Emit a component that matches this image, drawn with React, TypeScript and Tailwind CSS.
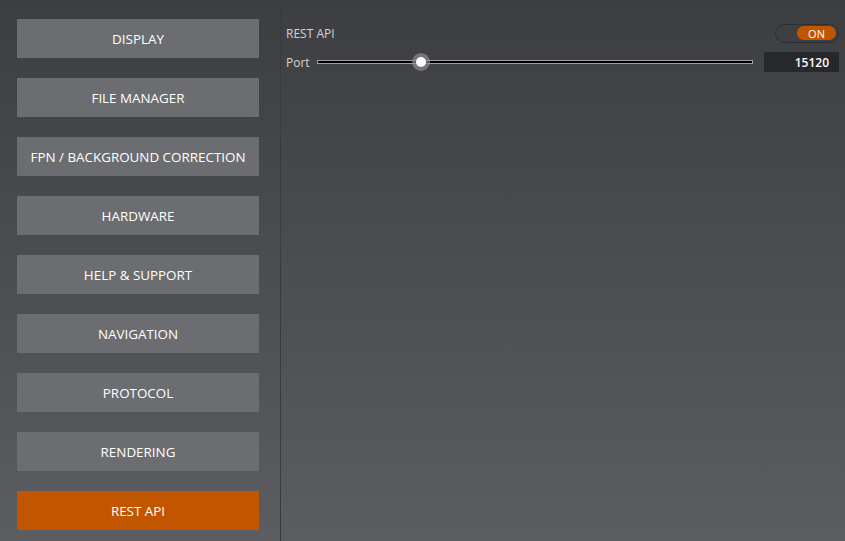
import { useState } from 'react';

const SECTIONS = [
  'DISPLAY',
  'FILE MANAGER',
  'FPN / BACKGROUND CORRECTION',
  'HARDWARE',
  'HELP & SUPPORT',
  'NAVIGATION',
  'PROTOCOL',
  'RENDERING',
  'REST API',
];

export default function App() {
  const [active, setActive] = useState('REST API');
  const [enabled, setEnabled] = useState(true);
  const [port] = useState(15120);

  return (
    <div
      className="flex h-[541px] w-[845px] bg-gradient-to-b from-[#3d3e42] to-[#5c5d61] text-white"
      style={{ fontFamily: '"Open Sans", "Noto Sans", sans-serif' }}
    >
      <aside className="flex w-[280px] shrink-0 flex-col gap-5 pl-[17px] pt-[19px]">
        {SECTIONS.map((name) => (
          <button
            key={name}
            onClick={() => setActive(name)}
            className={`h-[39px] w-[242px] pt-[2px] text-[13.4px] ${
              active === name ? 'bg-[#c25500]' : 'bg-[#6c6d71]'
            }`}
          >
            {name}
          </button>
        ))}
      </aside>

      <div className="w-px bg-[#3a3b3f]" />

      <main className="flex-1 pl-[5px] pr-[6px] pt-[24px]">
        <div className="flex h-[18px] items-center justify-between">
          <span className="pt-[2px] text-[12px] text-[#d4d4d8]">REST API</span>
          <button
            onClick={() => setEnabled(!enabled)}
            className="flex h-[19px] w-[64px] items-center justify-end rounded-full border border-[#2e2f33] bg-[#3e3f43] px-[2px]"
          >
            <span
              className={`flex h-[14px] w-[39px] items-center justify-center rounded-full text-[11px] leading-none ${
                enabled ? 'bg-[#c25500]' : 'bg-[#6c6d71]'
              }`}
            >
              {enabled ? 'ON' : 'OFF'}
            </span>
          </button>
        </div>

        <div className="mt-[10px] flex h-[20px] items-center">
          <span className="w-[31px] pt-[2px] text-[12px] text-[#d4d4d8]">Port</span>
          <div className="relative h-[4px] w-[436px] border border-[#a0a0a4] bg-black">
            <div className="absolute left-[94px] top-1/2 h-[18px] w-[18px] -translate-y-1/2 rounded-full bg-[#8a8b8f]/70">
              <div className="absolute left-[4px] top-[4px] h-[10px] w-[10px] rounded-full bg-white" />
            </div>
          </div>
          <div className="ml-auto flex h-[20px] w-[75px] items-center justify-end bg-[#27282c] px-[10px] pt-[1px] text-[12px] font-semibold">
            {port}
          </div>
        </div>
      </main>
    </div>
  );
}
